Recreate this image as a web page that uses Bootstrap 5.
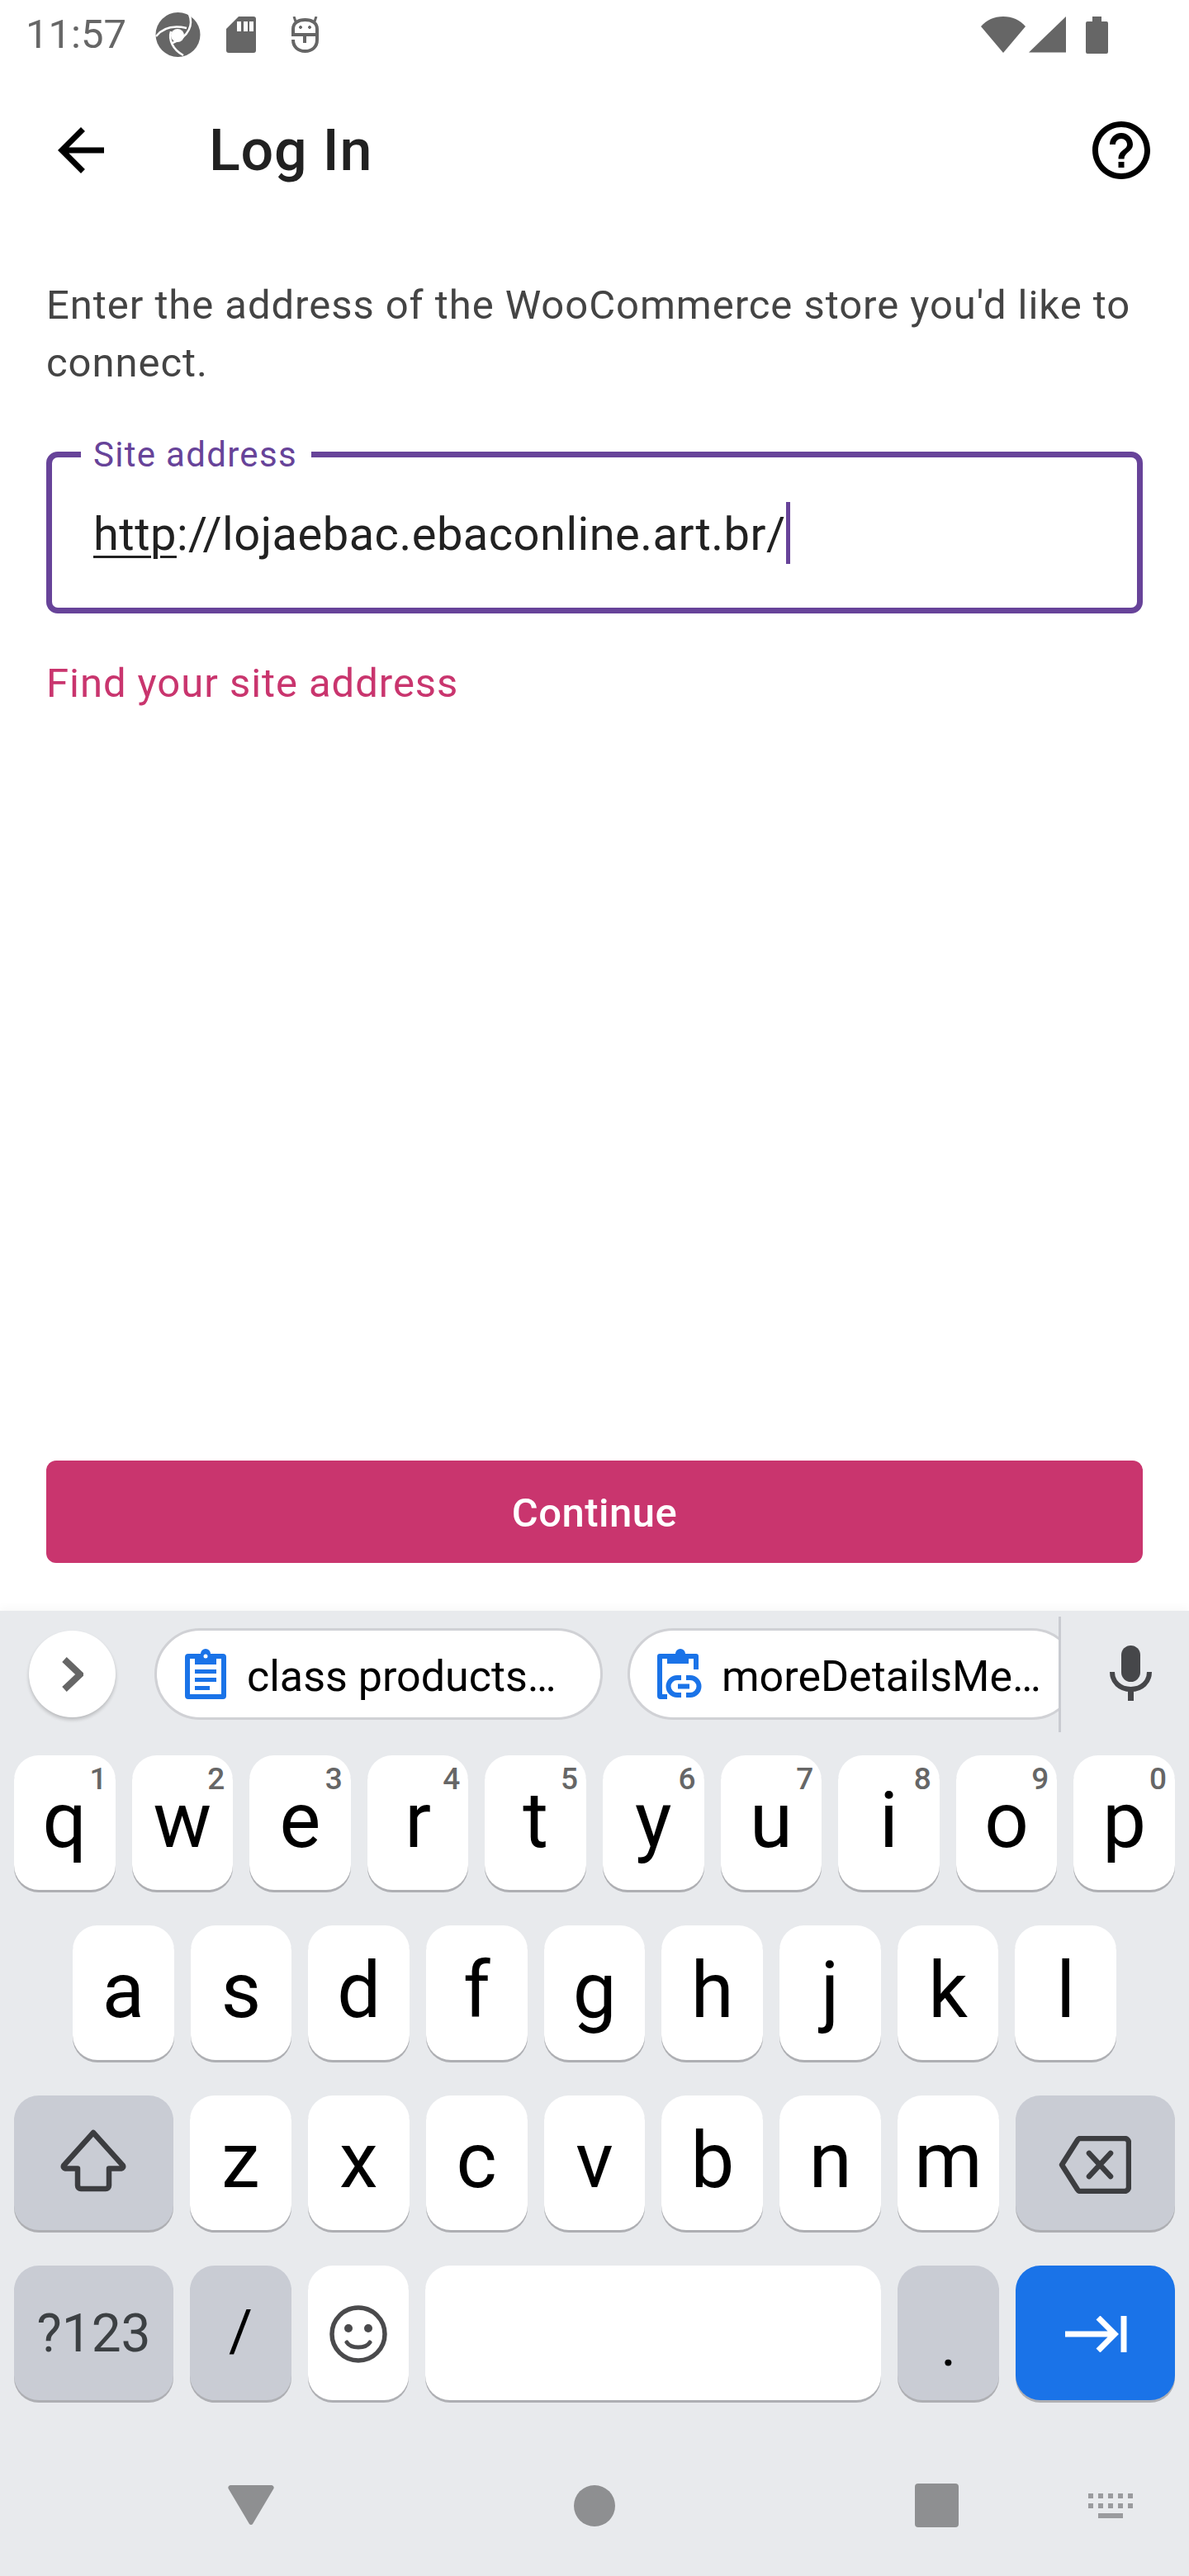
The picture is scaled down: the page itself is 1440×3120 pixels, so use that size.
<!DOCTYPE html>
<html lang="en">
<head>
    <meta charset="UTF-8">
    <meta name="viewport" content="width=device-width, initial-scale=1">
    <title>Log In</title>
    <link href="https://cdn.jsdelivr.net/npm/bootstrap@5.3.0/dist/css/bootstrap.min.css" rel="stylesheet">
    <style>
        html, body { width: 1440px; height: 3120px; overflow: hidden; }
        body { font-family: Roboto, "Liberation Sans", sans-serif; background: #fff; margin: 0; }
        svg { display: block; flex: none; }

        /* status bar */
        .stat-bar { height: 84px; padding-left: 31px; color: #666; position: relative; }
        .stat-time { font-size: 49px; line-height: 84px; width: 157px; }
        .stat-logo { margin-right: 31px; }
        .stat-sd { margin-right: 43px; }
        .stat-right { margin-left: auto; padding-right: 98px; }

        /* toolbar */
        .app-head { height: 196px; padding: 0 40px 0 56px; }
        .app-title { font-size: 70px; font-weight: 500; color: #212121; margin: 0 0 0 113px; line-height: 1; letter-spacing: .8px; }

        /* content */
        .form-zone { height: 1671px; padding: 55px 56px 58px; }
        .intro-text { font-size: 49px; line-height: 70px; letter-spacing: .95px; color: #444; margin: 0 0 72px; }
        .addr-box { height: 196px; border: 7px solid #674399; border-radius: 14px; padding-left: 50px; position: relative; }
        .addr-label { position: absolute; left: 35px; top: -26px; background: #fff; padding: 0 17px 0 15px; font-size: 42px; line-height: 46px; color: #674399; letter-spacing: 1.3px; }
        .addr-value { font-size: 56px; line-height: 66px; color: #212121; letter-spacing: .5px; display: flex; align-items: center; padding-top: 3px; }
        .addr-value u { text-underline-offset: 7px; text-decoration-thickness: 3px; }
        .addr-caret { width: 5px; height: 75px; background: #674399; margin-top: -3px; }
        .find-link { font-size: 49px; line-height: 70px; color: #c9356e; text-decoration: none; letter-spacing: .95px; display: block; margin-top: 50px; }
        .go-btn { margin-top: auto; height: 124px; padding-top: 9px; background: #c9356e; border: 0; border-radius: 12px; color: #fff; font-size: 49px; font-weight: 500; letter-spacing: .5px; }

        /* keyboard */
        .kb-wrap { height: 1169px; background: #e8eaed; box-shadow: 0 -4px 10px rgba(0, 0, 0, .03); }
        .kb-tools { height: 175px; padding: 21px 0 0 35px; }
        .kb-more { width: 105px; height: 105px; margin: 3px 47px 0 0; background: #fff; border-radius: 50%; box-shadow: 0 3px 4px rgba(0, 0, 0, .2); }
        .kb-chips { width: 1095px; height: 111px; overflow: hidden; gap: 30px; }
        .kb-chip { height: 111px; background: #fff; border: 3px solid #d0d1d5; border-radius: 56px; font-size: 52px; color: #000; white-space: nowrap; flex: none; }
        .kb-chip span { padding-top: 7px; }
        .chip-one { width: 543px; padding-left: 34px; gap: 25px; }
        .chip-two { width: 545px; padding-left: 33px; gap: 22px; }
        .kb-sep { width: 3px; height: 140px; background: #c9cbd1; margin-top: -14px; }
        .kb-mic { margin: 21px 0 0 59px; }
        .kb-row { height: 163px; margin-bottom: 43px; gap: 20px; padding: 0 17px; }
        .row-home { padding: 0 88px; }
        .kap { flex: 1 1 0; height: 163px; background: #fff; border-radius: 30px; box-shadow: 0 3px 0 #aeafb3; position: relative; font-size: 94px; line-height: 158px; text-align: center; color: #000; }
        .kap-fn { background: #c9ccd4; }
        .kap-wide { flex: 0 0 193px; }
        .kap-space { flex: 0 0 552px; }
        .kap-go { background: #1a73e8; }
        .kap-num { position: absolute; right: 10px; top: 7px; font-size: 37px; line-height: 44px; color: #666; font-weight: 500; }
        .kap-sym { font-size: 64px; line-height: 166px; color: #3c4043; }
        .kap-slash { font-size: 70px; }
        .kap-dot { font-size: 72px; line-height: 194px; }
        .kap svg { position: absolute; }
        .ic-shift { left: 56px; top: 41px; }
        .ic-back { left: 52px; top: 49px; }
        .ic-smile { left: 26px; top: 48px; }
        .ic-go { left: 60px; top: 61px; }

        /* navigation */
        .nav-low { padding: 58px 0 0 276px; }
        .nav-home { margin: 0 363px; }
        .nav-keys { margin-left: 157px; }
    </style>
</head>
<body>

<!-- Status bar -->
<div class="stat-bar d-flex align-items-center">
    <div class="stat-time">11:57</div>
    <svg class="stat-logo" width="55" height="54" viewBox="0 0 55 54">
        <circle cx="27.5" cy="27" r="27" fill="#666"/>
        <path d="M1 29C8 20 20 15 38 19M19 23C16 33 21 45 34 52M41 2C46 14 42 29 21 37" fill="none" stroke="#fff" stroke-width="2.5"/>
        <circle cx="27" cy="28" r="8" fill="#fff"/>
    </svg>
    <svg class="stat-sd" width="36" height="44" viewBox="0 0 36 44">
        <path d="M15 0H33a3 3 0 0 1 3 3V41a3 3 0 0 1-3 3H3a3 3 0 0 1-3-3V15z" fill="#666"/>
        <path d="M13 6h5v12h-5zM21 6h5v12h-5zM28 6h5v12h-5z" fill="#fff"/>
    </svg>
    <svg width="33" height="44" viewBox="0 0 33 44" fill="none" stroke="#666">
        <path d="M2 24V15C2 8 8 4 16.500 4S31 8 31 15V22H2M2 28C2 37 8 42 16.500 42S31 37 31 28V24M16 22V32" stroke-width="4"/>
        <path d="M3 0L5 6M30 0L28 6" stroke-width="3"/>
        <circle cx="11" cy="13" r="1.500" fill="#666"/>
        <circle cx="22" cy="13" r="1.500" fill="#666"/>
    </svg>
    <div class="stat-right d-flex align-items-center">
        <svg width="54" height="44" viewBox="0 0 54 44"><path d="M0 12C7 4 16 0 27 0S47 4 54 12L27 44z" fill="#666"/></svg>
        <svg class="ms-1" width="45" height="44" viewBox="0 0 45 44"><path d="M0 43.500H45V0z" fill="#666"/></svg>
        <svg class="ms-4" width="27" height="45" viewBox="0 0 27 45"><path d="M8 0H19V6H25a2 2 0 0 1 2 2V43a2 2 0 0 1-2 2H2a2 2 0 0 1-2-2V8a2 2 0 0 1 2-2H8z" fill="#666"/></svg>
    </div>
</div>

<!-- Toolbar -->
<div class="app-head d-flex align-items-center">
    <svg width="84" height="84" viewBox="0 0 24 24"><path d="M20 11H7.830l5.590-5.590L12 4l-8 8 8 8 1.410-1.410L7.830 13H20v-2z" fill="#000"/></svg>
    <h1 class="app-title flex-grow-1">Log In</h1>
    <svg width="84" height="84" viewBox="0 0 24 24"><path d="M11 18h2v-2h-2v2zm1-16C6.480 2 2 6.480 2 12s4.480 10 10 10 10-4.480 10-10S17.520 2 12 2zm0 18c-4.410 0-8-3.590-8-8s3.590-8 8-8 8 3.590 8 8-3.590 8-8 8zm0-14c-2.210 0-4 1.790-4 4h2c0-1.100.9-2 2-2s2 .9 2 2c0 2-3 1.750-3 5h2c0-2.250 3-2.500 3-5 0-2.210-1.790-4-4-4z" fill="#000"/></svg>
</div>

<!-- Formulaire -->
<div class="form-zone d-flex flex-column">
    <p class="intro-text">Enter the address of the WooCommerce store you'd like to connect.</p>
    <div class="addr-box d-flex align-items-center">
        <span class="addr-label">Site address</span>
        <div class="addr-value"><u>http</u>://lojaebac.ebaconline.art.br/<span class="addr-caret"></span></div>
    </div>
    <a class="find-link" href="#">Find your site address</a>
    <button class="btn go-btn w-100" type="button">Continue</button>
</div>

<!-- Clavier -->
<div class="kb-wrap">
    <div class="kb-tools d-flex">
        <div class="kb-more d-flex align-items-center justify-content-center">
            <svg width="26" height="42" viewBox="0 0 26 42"><path d="M3 3L22 21L3 39" fill="none" stroke="#666" stroke-width="8"/></svg>
        </div>
        <div class="kb-chips d-flex">
            <div class="kb-chip chip-one d-flex align-items-center">
                <svg width="50" height="61" viewBox="0 0 50 61">
                    <path d="M25 0a6 6 0 0 1 6 6H46a4 4 0 0 1 4 4V57a4 4 0 0 1-4 4H4a4 4 0 0 1-4-4V10a4 4 0 0 1 4-4H19a6 6 0 0 1 6-6z" fill="#1a73e8"/>
                    <path d="M6 12H12V19H38V12H44V55H6z" fill="#fff"/>
                    <circle cx="25" cy="9" r="2.500" fill="#fff"/>
                    <path d="M12 25H38V30H12zM12 35H38V40H12zM12 45H30V50H12z" fill="#1a73e8"/>
                </svg>
                <span>class products…</span>
            </div>
            <div class="kb-chip chip-two d-flex align-items-center">
                <svg width="56" height="62" viewBox="0 0 56 62" fill="none">
                    <path d="M28 0a6 6 0 0 1 6 6H47a3 3 0 0 1 3 3V25H44V12H38V18H12V12H6V55H12V61H4a4 4 0 0 1-4-4V9a3 3 0 0 1 3-3H22a6 6 0 0 1 6-6z" fill="#1a73e8"/>
                    <path d="M29 35H24a10.500 10.500 0 0 0 0 21H29M35 35H40a10.500 10.500 0 0 1 0 21H35" stroke="#1a73e8" stroke-width="6"/>
                    <path d="M25 45.500H39" stroke="#1a73e8" stroke-width="6"/>
                </svg>
                <span>moreDetailsMe…</span>
            </div>
        </div>
        <div class="kb-sep"></div>
        <svg class="kb-mic" width="51" height="67" viewBox="0 0 51 67" fill="none">
            <rect x="14" y="0" width="23" height="44" rx="11.500" fill="#46474a"/>
            <path d="M3 32C3 44 12 53 25.500 53S48 44 48 32" stroke="#46474a" stroke-width="6"/>
            <path d="M25.500 50V67" stroke="#46474a" stroke-width="7"/>
        </svg>
    </div>

    <div class="kb-row d-flex">
        <div class="kap">q<span class="kap-num">1</span></div>
        <div class="kap">w<span class="kap-num">2</span></div>
        <div class="kap">e<span class="kap-num">3</span></div>
        <div class="kap">r<span class="kap-num">4</span></div>
        <div class="kap">t<span class="kap-num">5</span></div>
        <div class="kap">y<span class="kap-num">6</span></div>
        <div class="kap">u<span class="kap-num">7</span></div>
        <div class="kap">i<span class="kap-num">8</span></div>
        <div class="kap">o<span class="kap-num">9</span></div>
        <div class="kap">p<span class="kap-num">0</span></div>
    </div>
    <div class="kb-row row-home d-flex">
        <div class="kap">a</div>
        <div class="kap">s</div>
        <div class="kap">d</div>
        <div class="kap">f</div>
        <div class="kap">g</div>
        <div class="kap">h</div>
        <div class="kap">j</div>
        <div class="kap">k</div>
        <div class="kap">l</div>
    </div>
    <div class="kb-row d-flex">
        <div class="kap kap-fn kap-wide">
            <svg class="ic-shift" width="80" height="76" viewBox="0 0 80 76"><path d="M40 4L76 44a2.500 2.500 0 0 1-2 3.500H59V68a4 4 0 0 1-4 4H25a4 4 0 0 1-4-4V47.500H6a2.500 2.500 0 0 1-2-3.500z" fill="none" stroke="#3c3d40" stroke-width="6.500" stroke-linejoin="round"/></svg>
        </div>
        <div class="kap">z</div>
        <div class="kap">x</div>
        <div class="kap">c</div>
        <div class="kap">v</div>
        <div class="kap">b</div>
        <div class="kap">n</div>
        <div class="kap">m</div>
        <div class="kap kap-fn kap-wide">
            <svg class="ic-back" width="88" height="70" viewBox="0 0 88 70" fill="none" stroke="#3c3d40" stroke-width="6.500" stroke-linejoin="round" stroke-linecap="round"><path d="M4 35L23 5a4 4 0 0 1 3-2H80a5 5 0 0 1 5 5V62a5 5 0 0 1-5 5H26a4 4 0 0 1-3-2z"/><path d="M37 21L63 49M63 21L37 49"/></svg>
        </div>
    </div>
    <div class="kb-row d-flex">
        <div class="kap kap-fn kap-wide kap-sym">?123</div>
        <div class="kap kap-fn kap-slash">/</div>
        <div class="kap">
            <svg class="ic-smile" width="70" height="70" viewBox="0 0 70 70" fill="none"><circle cx="35" cy="35" r="32" stroke="#4a4a4c" stroke-width="5.500"/><circle cx="23" cy="28" r="5" fill="#4a4a4c"/><circle cx="47" cy="28" r="5" fill="#4a4a4c"/><path d="M21 45C26 53 44 53 49 45" stroke="#4a4a4c" stroke-width="5" stroke-linecap="round"/></svg>
        </div>
        <div class="kap kap-space"></div>
        <div class="kap kap-fn kap-dot">.</div>
        <div class="kap kap-go kap-wide">
            <svg class="ic-go" width="75" height="44" viewBox="0 0 75 44" fill="none" stroke="#fff" stroke-width="7"><path d="M0 22H60M40 2L60 22L40 42"/><path d="M71 0V44"/></svg>
        </div>
    </div>

    <!-- Barre de navigation -->
    <div class="nav-low d-flex align-items-center">
        <svg width="56" height="49" viewBox="0 0 56 49"><path d="M3 0H53a3 3 0 0 1 2.500 4L30 47a2.500 2.500 0 0 1-4 0L.5 4A3 3 0 0 1 3 0z" fill="#8e8f91"/></svg>
        <svg class="nav-home" width="50" height="50" viewBox="0 0 50 50"><circle cx="25" cy="25" r="25" fill="#8e8f91"/></svg>
        <svg width="53" height="53" viewBox="0 0 53 53"><rect width="53" height="53" rx="4" fill="#8e8f91"/></svg>
        <svg class="nav-keys" width="54" height="30" viewBox="0 0 54 30" fill="#9a9b9e">
            <path d="M0 0h6v6H0zM12 0h6v6h-6zM24 0h6v6h-6zM36 0h6v6h-6zM48 0h6v6h-6zM0 12h6v6H0zM12 12h6v6h-6zM24 12h6v6h-6zM36 12h6v6h-6zM48 12h6v6h-6zM12 24h30v6H12z"/>
        </svg>
    </div>
</div>

<script src="https://cdn.jsdelivr.net/npm/bootstrap@5.3.0/dist/js/bootstrap.bundle.min.js"></script>
</body>
</html>
